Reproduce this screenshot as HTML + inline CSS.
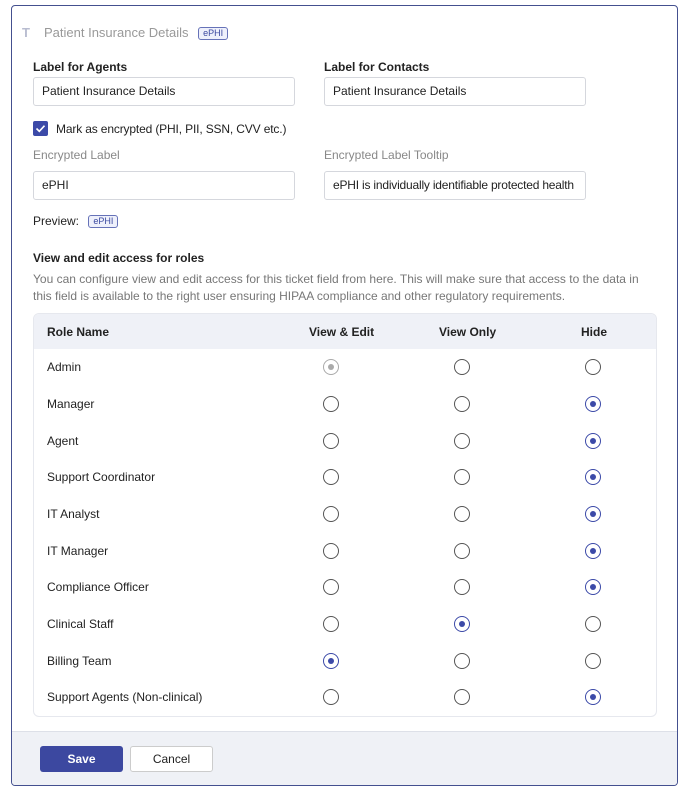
<!DOCTYPE html>
<html><head><style>
*{box-sizing:border-box;margin:0;padding:0}
body{width:687px;height:795px;background:#fff;font-family:"Liberation Sans",sans-serif;font-size:12px;color:#222;position:relative;overflow:hidden}
.card{position:absolute;left:11px;top:5px;width:667px;height:781px;border:1px solid #44508f;border-radius:4px;overflow:hidden}
.abs{position:absolute}
.tag{display:inline-block;border:1px solid #6672b8;color:#3c4aa0;background:#eef0fb;border-radius:3px;font-size:9px;padding:0 4px;line-height:11px;vertical-align:1px}
.lbl{font-weight:bold;font-size:12px;color:#222}
.inp{position:absolute;width:262px;height:29px;border:1px solid #d5d7dd;border-radius:3px;padding:0 8px;line-height:27px;font-size:12px;color:#222;white-space:nowrap;overflow:hidden}
.grey{color:#888}
.table{position:absolute;left:21px;top:307px;width:624px;height:404px;border:1px solid #e6e8ee;border-radius:6px;overflow:hidden}
.th{position:absolute;top:0;left:0;width:100%;height:35px;background:#eff1f7}
.r{position:absolute;width:16px;height:16px;border:1px solid #555;border-radius:50%;transform:translate(-8px,-8px)}
.r.on{border-color:#3c4aa8}
.r.on::after{content:"";position:absolute;left:4px;top:4px;width:6px;height:6px;border-radius:50%;background:#3c4aa8}
.r.dis{border-color:#aaa}
.r.dis::after{content:"";position:absolute;left:4px;top:4px;width:6px;height:6px;border-radius:50%;background:#aaa}
.foot{position:absolute;left:0;top:725px;width:100%;height:56px;background:#eff1f6;border-top:1px solid #dde0e8}
</style></head><body>
<div class="card">
<div class="abs" style="left:10px;top:19px;font-size:13px;font-weight:bold;color:#b8bcd0">T</div>
<div class="abs" style="left:32px;top:19px;font-size:13px;color:#999">Patient Insurance Details <span class="tag" style="margin-left:6px">ePHI</span></div>
<div class="abs lbl" style="left:21px;top:54px">Label for Agents</div>
<div class="abs lbl" style="left:312px;top:54px">Label for Contacts</div>
<div class="inp" style="left:21px;top:71px">Patient Insurance Details</div>
<div class="inp" style="left:312px;top:71px">Patient Insurance Details</div>
<div class="abs" style="left:21px;top:115px;width:15px;height:15px;background:#3c4aa8;border-radius:2px"><svg width="15" height="15"><path d="M3.5 7.5l2.8 2.8 5.2-5.6" stroke="#fff" stroke-width="1.6" fill="none"/></svg></div>
<div class="abs" style="left:44px;top:116px;font-size:12px;letter-spacing:-0.15px">Mark as encrypted (PHI, PII, SSN, CVV etc.)</div>
<div class="abs grey" style="left:21px;top:142px">Encrypted Label</div>
<div class="abs grey" style="left:312px;top:142px">Encrypted Label Tooltip</div>
<div class="inp" style="left:21px;top:165px">ePHI</div>
<div class="inp" style="left:312px;top:165px;letter-spacing:-0.2px">ePHI is individually identifiable protected health</div>
<div class="abs" style="left:21px;top:208px">Preview: <span class="tag" style="margin-left:6px">ePHI</span></div>
<div class="abs lbl" style="left:21px;top:245px">View and edit access for roles</div>
<div class="abs" style="left:21px;top:265px;width:625px;color:#777;line-height:17px;font-size:12px">You can configure view and edit access for this ticket field from here. This will make sure that access to the data in<br>this field is available to the right user ensuring HIPAA compliance and other regulatory requirements.</div>
<div class="table">
<div class="th"></div>
<div class="abs lbl" style="left:13px;top:11px">Role Name</div>
<div class="abs lbl" style="left:275px;top:11px">View &amp; Edit</div>
<div class="abs lbl" style="left:405px;top:11px">View Only</div>
<div class="abs lbl" style="left:547px;top:11px">Hide</div>
</div>
<div class="foot"></div>
<div class="abs" style="left:28px;top:740px;width:83px;height:26px;background:#3c48a0;border-radius:3px;color:#fff;font-weight:bold;text-align:center;line-height:26px">Save</div>
<div class="abs" style="left:118px;top:740px;width:83px;height:26px;background:#fff;border:1px solid #ccc;border-radius:3px;text-align:center;line-height:24px">Cancel</div>
</div>
<div id="rows"></div>
<script>
var rows=[["Admin",367,-1],["Manager",404,2],["Agent",441,2],["Support Coordinator",477,2],["IT Analyst",514,2],["IT Manager",551,2],["Compliance Officer",587,2],["Clinical Staff",624,1],["Billing Team",661,0],["Support Agents (Non-clinical)",697,2]];
var xs=[331,462,593],h="";
rows.forEach(function(r){
h+='<div class="abs" style="left:47px;top:'+(r[1]-7)+'px">'+r[0]+'</div>';
xs.forEach(function(x,i){var c="r";if(r[2]==-1&&i==0)c+=" dis";else if(r[2]==i)c+=" on";h+='<div class="'+c+'" style="left:'+x+'px;top:'+r[1]+'px"></div>';});
});
document.getElementById("rows").innerHTML=h;
</script>
</body></html>
